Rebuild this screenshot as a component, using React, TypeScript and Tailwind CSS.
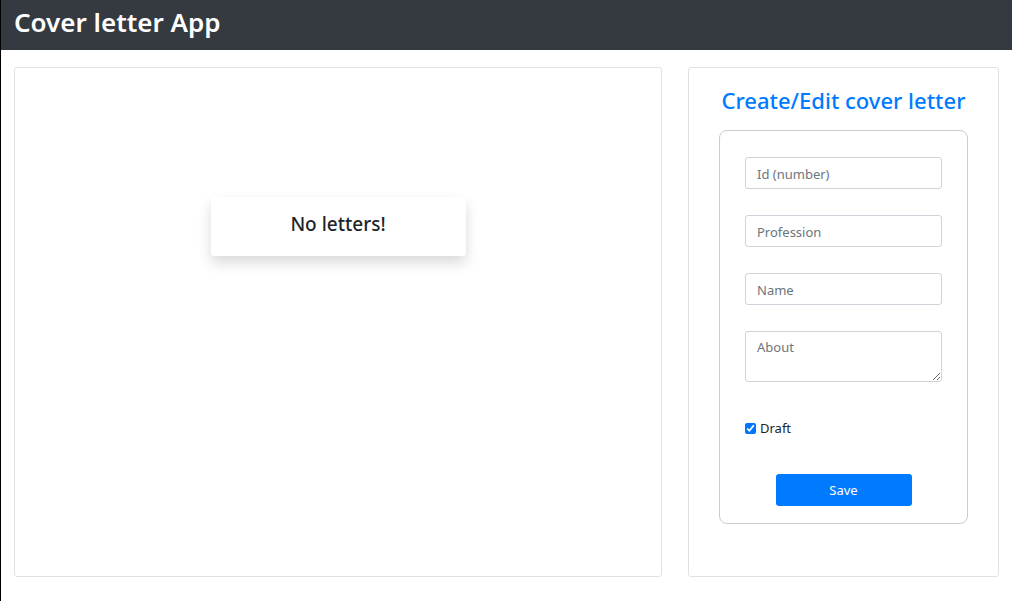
import { useState } from "react";

const fieldClass =
  "block w-full rounded-[3px] border border-[#ced4da] bg-white px-[11px] text-[13px] leading-5 text-[#495057] placeholder:text-[#6c757d] focus:outline-2 focus:outline-[#80bdff]";

function LetterList() {
  return (
    <section className="flex grow flex-col items-center rounded-[3px] border border-[#dee2e6] px-4 pt-[129px]">
      <div className="h-[59px] w-full max-w-[255px] rounded-[3px] bg-white pt-[13px] text-center shadow-[0_7px_14px_rgba(0,0,0,0.15)]">
        <h2 className="text-[19px] leading-7 font-medium text-[#212529]">No letters!</h2>
      </div>
    </section>
  );
}

function LetterForm() {
  const [draft, setDraft] = useState(true);
  return (
    <section className="grow rounded-[3px] border border-[#dee2e6] px-[30px] pt-[18px] pb-12">
      <h2 className="text-center text-[22px] leading-7 font-medium whitespace-nowrap text-[#007bff]">
        Create/Edit cover letter
      </h2>
      <form
        className="mt-4 rounded-lg border border-[#cccccc] px-[25px] pt-[26px] pb-[17px]"
        onSubmit={(e) => e.preventDefault()}
      >
        <div className="flex flex-col gap-[26px]">
          <input className={`${fieldClass} h-8 pt-[2px]`} type="text" inputMode="numeric" placeholder="Id (number)" aria-label="Id (number)" />
          <input className={`${fieldClass} h-8 pt-[2px]`} type="text" placeholder="Profession" aria-label="Profession" />
          <input className={`${fieldClass} h-8 pt-[2px]`} type="text" placeholder="Name" aria-label="Name" />
          <textarea className={`${fieldClass} h-[51px] resize-y py-[5px]`} placeholder="About" aria-label="About" />
        </div>
        <label className="mt-9 flex w-fit items-center gap-1 text-[13px] leading-5 text-[#212529]">
          <input
            className="size-[11px] accent-[#0075ff]"
            type="checkbox"
            checked={draft}
            onChange={(e) => setDraft(e.target.checked)}
          />
          Draft
        </label>
        <button
          className="mx-auto mt-9 block h-8 w-[136px] rounded-[3px] bg-[#007bff] text-[13px] leading-5 text-white hover:bg-[#0069d9]"
          type="submit"
        >
          Save
        </button>
      </form>
    </section>
  );
}

export default function App() {
  return (
    <div className="min-h-screen border-l border-black bg-white font-['Noto_Sans','Open_Sans',sans-serif]">
      <header className="bg-[#343a40] px-[13px] pt-1 pb-[10px]">
        <h1 className="text-[26px] leading-9 font-semibold text-white">Cover letter App</h1>
      </header>
      <main className="flex pt-[17px]">
        <div className="flex min-h-[510px] w-2/3 px-[13px]">
          <LetterList />
        </div>
        <div className="flex min-h-[510px] w-1/3 px-[13px]">
          <LetterForm />
        </div>
      </main>
    </div>
  );
}
